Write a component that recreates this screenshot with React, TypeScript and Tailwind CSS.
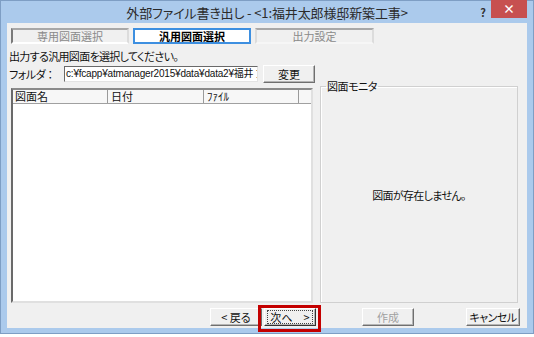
const jp = "font-['Noto_Sans_CJK_JP','Noto_Sans',sans-serif] [font-feature-settings:'palt']";

function Btn({ children, disabled, className = "" }: { children: React.ReactNode; disabled?: boolean; className?: string }) {
  return (
    <div
      className={`flex h-[18px] w-[52px] items-center justify-center border border-t-white border-l-white border-r-[#6f6f6f] border-b-[#6f6f6f] bg-[#f0f0f0] text-[11px] leading-none shadow-[inset_-1px_-1px_0_#b5b5b5] ${disabled ? "text-[#a0a0a0]" : "text-[#111]"} ${className}`}
    >
      {children}
    </div>
  );
}

export default function App() {
  return (
    <div className={`h-[337px] w-[534px] bg-white ${jp}`}>
      <div className="flex h-[334px] w-[534px] flex-col border border-[#7e9ec4] bg-[#abcaec]">
        {/* title bar */}
        <div className="relative flex h-[22px] shrink-0 items-center justify-center">
          <span className="text-[13px] leading-none tracking-[-0.01em] text-[#2b2b2b]">
            外部ファイル書き出し - &lt;1:福井太郎様邸新築工事&gt;
          </span>
          <span className="absolute right-[47px] top-[3px] text-[11px] font-bold text-[#333]">?</span>
          <div className="absolute -top-px right-[6px] flex h-[18px] w-[36px] items-center justify-center bg-[#c75050] text-[12px] font-bold text-white">
            ×
          </div>
        </div>

        {/* client area */}
        <div className="relative mx-[6px] flex h-[305px] flex-col bg-[#f0f0f0] text-[11px] text-[#111]">
          {/* tabs */}
          <div className="ml-[4px] mt-[5px] flex gap-[4px]">
            <div className="flex h-[16px] w-[118px] items-center justify-center border-2 border-t-[#a8a8a8] border-l-[#7a7a7a] border-r-[#dcdcdc] border-b-white bg-[#f0f0f0] text-[11px] text-[#8a8a8a]">
              専用図面選択
            </div>
            <div className="flex h-[16px] w-[118px] items-center justify-center border-2 border-[#3d8fe0] bg-white text-[11px] font-bold text-black">
              汎用図面選択
            </div>
            <div className="flex h-[16px] w-[119px] items-center justify-center border-2 border-t-[#a8a8a8] border-l-[#dcdcdc] border-r-[#dcdcdc] border-b-[#f6f6f6] bg-[#f0f0f0] text-[11px] text-[#8a8a8a]">
              出力設定
            </div>
          </div>

          {/* instruction */}
          <div className="ml-[2px] mt-[5px] h-[14px] text-[11px] leading-[14px] tracking-[-0.06em]">出力する汎用図面を選択してください。</div>

          {/* folder row */}
          <div className="mt-[2px] flex h-[18px] items-center">
            <span className="ml-[2px] w-[55px] text-[11px] tracking-[-0.04em]">フォルダ ：</span>
            <div className="flex h-[16px] w-[194px] items-center overflow-hidden whitespace-nowrap border border-t-[#696969] border-l-[#696969] border-r-[#e3e3e3] border-b-[#e3e3e3] bg-white pl-[1px] font-['Liberation_Sans','Noto_Sans_CJK_JP',sans-serif] text-[10px] leading-none tracking-[-0.02em]">
              c:¥fcapp¥atmanager2015¥data¥data2¥福井 方
            </div>
            <Btn className="ml-[5px]">変更</Btn>
          </div>

          {/* main */}
          <div className="mt-[2px] flex items-start">
            {/* list */}
            <div className="ml-[4px] mt-[3px] flex h-[215px] w-[302px] flex-col border-2 border-t-[#8a8a8a] border-l-[#6a6a6a] border-r-[#e0e0e0] border-b-[#e0e0e0] bg-white">
              <div className="flex h-[14px] shrink-0 border-b border-[#a0a0a0] bg-[#f7f7f7] text-[11px] leading-[13px]">
                <div className="w-[95px] border-r border-[#9a9a9a] pl-[2px]">図面名</div>
                <div className="w-[96px] border-r border-[#9a9a9a] pl-[3px]">日付</div>
                <div className="w-[95px] border-r border-[#9a9a9a] pl-[3px]">ﾌｧｲﾙ</div>
                <div className="flex-1" />
              </div>
              <div className="flex-1" />
            </div>

            {/* group box */}
            <fieldset className="-mt-[5px] ml-[7px] h-[223px] w-[198px] border border-[#d0d0d0] px-[5px] shadow-[inset_1px_1px_0_#ffffff]">
              <legend className="ml-[0px] px-[1px] text-[11px] leading-[12px] tracking-[-0.04em]">図面モニタ</legend>
              <div className="flex h-[207px] items-center justify-center text-[11px] tracking-[-0.06em]">図面が存在しません。</div>
            </fieldset>
          </div>

          {/* buttons */}
          <div className="mt-[5px] flex h-[18px]">
            <Btn className="ml-[203px]">&lt; 戻る</Btn>
            <div className="relative ml-[2px]">
              <Btn className="border-r-[#333] border-b-[#333]">
                <span className="border border-dotted border-[#444] px-[2px] leading-[12px]">次へ　&gt;</span>
              </Btn>
              <div className="absolute left-[-6px] top-[-3px] h-[27px] w-[63px] border-[3px] border-[#c40000]" />
            </div>
            <Btn disabled className="ml-[46px]">作成</Btn>
            <Btn className="ml-[52px] w-[54px] tracking-[-0.05em]">キャンセル</Btn>
          </div>
        </div>
      </div>
    </div>
  );
}
